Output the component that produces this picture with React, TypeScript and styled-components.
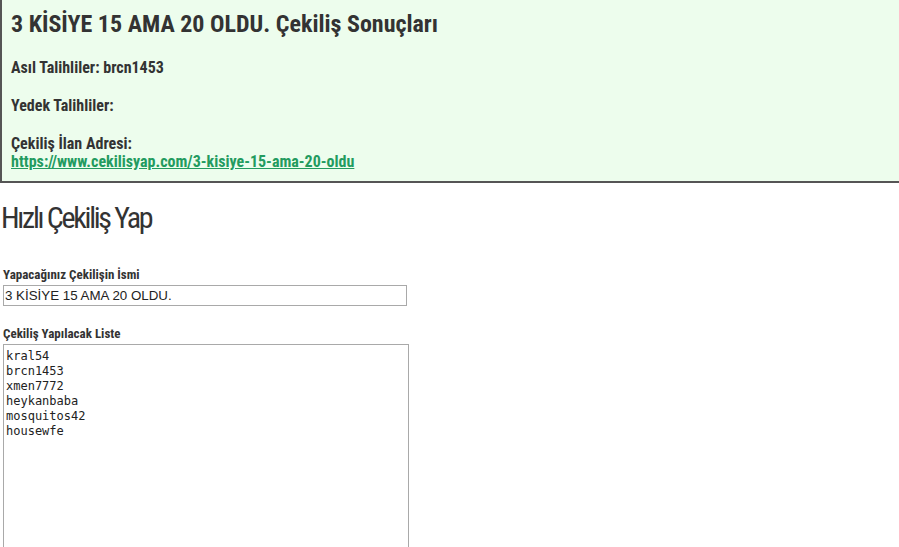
import React from 'react'
import styled, { createGlobalStyle } from 'styled-components'

const GlobalStyle = createGlobalStyle`
  html, body {
    margin: 0;
    padding: 0;
    background: #fff;
    overflow: hidden;
  }
  body {
    font-family: Roboto, "Liberation Sans", sans-serif;
    color: #333;
  }
`

const ResultBox = styled.section`
  background: #edfded;
  border-left: 2px solid #555;
  border-bottom: 2px solid #555;
  padding: 9px 10px 10px 9px;
  font-stretch: 75%;
`

const ResultTitle = styled.h2`
  margin: 0 0 20px 0;
  font-size: 24px;
  line-height: 30px;
  font-weight: 700;
`

const ResultLine = styled.p`
  margin: 0 0 20px 0;
  font-size: 16px;
  line-height: 18px;
  font-weight: 700;

  &:last-child {
    margin-bottom: 0;
  }
`

const ResultLink = styled.a`
  color: #239b5f;
  text-decoration: underline;
`

const PageTitle = styled.h1`
  margin: 17px 0 0 1px;
  font-size: 30px;
  line-height: 36px;
  font-weight: 400;
  font-stretch: 75%;
  letter-spacing: -2.3px;
`

const Form = styled.form`
  display: flex;
  flex-direction: column;
  align-items: flex-start;
  padding-left: 3px;
`

const Field = styled.div<{ $top: number }>`
  display: flex;
  flex-direction: column;
  margin-top: ${(p) => p.$top}px;
`

const Label = styled.label`
  font-size: 13px;
  line-height: 15px;
  font-weight: 700;
  font-stretch: 75%;
  margin-bottom: 3px;
`

const TextInput = styled.input`
  box-sizing: border-box;
  width: 404px;
  height: 21px;
  margin: 0;
  padding: 0 1px;
  border: 1px solid #a9a9a9;
  font-family: "Liberation Sans", Arial, sans-serif;
  font-size: 13.33px;
  color: #222;
  outline: none;
`

const ListArea = styled.textarea`
  box-sizing: border-box;
  width: 406px;
  height: 220px;
  margin: 0;
  padding: 4px 2px 2px;
  border: 1px solid #a9a9a9;
  font-family: "DejaVu Sans Mono", monospace;
  font-size: 12px;
  line-height: 15px;
  color: #222;
  resize: both;
  outline: none;
`

const names = ['kral54', 'brcn1453', 'xmen7772', 'heykanbaba', 'mosquitos42', 'housewfe']

const App: React.FC = () => {
  return (
    <>
      <GlobalStyle />
      <ResultBox>
        <ResultTitle>3 KİSİYE 15 AMA 20 OLDU. Çekiliş Sonuçları</ResultTitle>
        <ResultLine>Asıl Talihliler: brcn1453</ResultLine>
        <ResultLine>Yedek Talihliler:</ResultLine>
        <ResultLine>
          Çekiliş İlan Adresi:
          <br />
          <ResultLink href="#">https://www.cekilisyap.com/3-kisiye-15-ama-20-oldu</ResultLink>
        </ResultLine>
      </ResultBox>
      <PageTitle>Hızlı Çekiliş Yap</PageTitle>
      <Form onSubmit={(e) => e.preventDefault()}>
        <Field $top={31}>
          <Label htmlFor="name">Yapacağınız Çekilişin İsmi</Label>
          <TextInput id="name" defaultValue="3 KİSİYE 15 AMA 20 OLDU." />
        </Field>
        <Field $top={20}>
          <Label htmlFor="list">Çekiliş Yapılacak Liste</Label>
          <ListArea id="list" defaultValue={names.join('\n')} />
        </Field>
      </Form>
    </>
  )
}

export default App
